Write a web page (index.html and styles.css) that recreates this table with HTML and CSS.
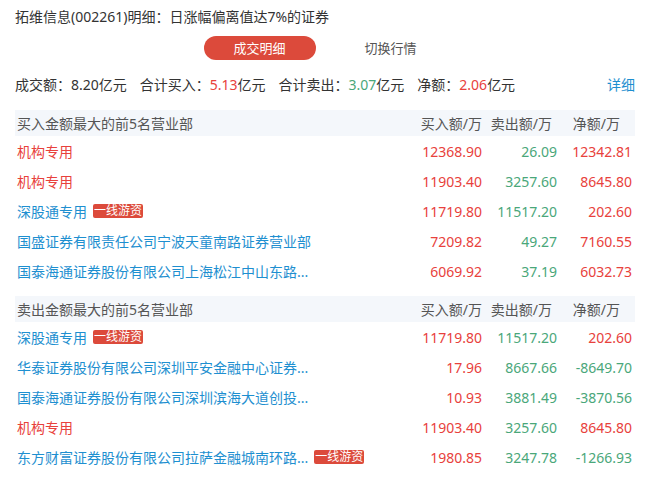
FILE: index.html
```html
<!DOCTYPE html>
<html lang="zh-CN">
<head>
<meta charset="utf-8">
<link rel="stylesheet" href="styles.css">
</head>
<body>
<div class="page">
  <div class="title">拓维信息(002261)明细：日涨幅偏离值达7%的证券</div>
  <div class="tabs">
    <div class="tab active">成交明细</div>
    <div class="tab">切换行情</div>
  </div>
  <div class="summary">
    <div class="stats">
      <span class="stat">成交额：8.20亿元</span>
      <span class="stat">合计买入：<span class="red">5.13</span>亿元</span>
      <span class="stat">合计卖出：<span class="green">3.07</span>亿元</span>
      <span class="stat">净额：<span class="red">2.06</span>亿元</span>
    </div>
    <span class="more">详细</span>
  </div>

  <div class="table">
    <div class="row head">
      <div class="name">买入金额最大的前5名营业部</div>
      <div class="num">买入额/万</div>
      <div class="num h2">卖出额/万</div>
      <div class="num h3">净额/万</div>
    </div>
    <div class="row">
      <div class="name"><span class="inst">机构专用</span></div>
      <div class="num red">12368.90</div>
      <div class="num green">26.09</div>
      <div class="num red">12342.81</div>
    </div>
    <div class="row">
      <div class="name"><span class="inst">机构专用</span></div>
      <div class="num red">11903.40</div>
      <div class="num green">3257.60</div>
      <div class="num red">8645.80</div>
    </div>
    <div class="row">
      <div class="name"><span class="broker">深股通专用</span><span class="tag">一线游资</span></div>
      <div class="num red">11719.80</div>
      <div class="num green">11517.20</div>
      <div class="num red">202.60</div>
    </div>
    <div class="row">
      <div class="name"><span class="broker">国盛证券有限责任公司宁波天童南路证券营业部</span></div>
      <div class="num red">7209.82</div>
      <div class="num green">49.27</div>
      <div class="num red">7160.55</div>
    </div>
    <div class="row">
      <div class="name"><span class="broker">国泰海通证券股份有限公司上海松江中山东路...</span></div>
      <div class="num red">6069.92</div>
      <div class="num green">37.19</div>
      <div class="num red">6032.73</div>
    </div>
  </div>

  <div class="table second">
    <div class="row head">
      <div class="name">卖出金额最大的前5名营业部</div>
      <div class="num">买入额/万</div>
      <div class="num h2">卖出额/万</div>
      <div class="num h3">净额/万</div>
    </div>
    <div class="row">
      <div class="name"><span class="broker">深股通专用</span><span class="tag">一线游资</span></div>
      <div class="num red">11719.80</div>
      <div class="num green">11517.20</div>
      <div class="num red">202.60</div>
    </div>
    <div class="row">
      <div class="name"><span class="broker">华泰证券股份有限公司深圳平安金融中心证券...</span></div>
      <div class="num red">17.96</div>
      <div class="num green">8667.66</div>
      <div class="num green">-8649.70</div>
    </div>
    <div class="row">
      <div class="name"><span class="broker">国泰海通证券股份有限公司深圳滨海大道创投...</span></div>
      <div class="num red">10.93</div>
      <div class="num green">3881.49</div>
      <div class="num green">-3870.56</div>
    </div>
    <div class="row">
      <div class="name"><span class="inst">机构专用</span></div>
      <div class="num red">11903.40</div>
      <div class="num green">3257.60</div>
      <div class="num red">8645.80</div>
    </div>
    <div class="row">
      <div class="name"><span class="broker">东方财富证券股份有限公司拉萨金融城南环路...</span><span class="tag">一线游资</span></div>
      <div class="num red">1980.85</div>
      <div class="num green">3247.78</div>
      <div class="num green">-1266.93</div>
    </div>
  </div>
</div>
</body>
</html>
```

FILE: styles.css
```css
* { box-sizing: border-box; }
html, body { margin: 0; padding: 0; background: #fff; }
body {
  font-family: "Noto Sans", "Noto Sans CJK SC", sans-serif;
  font-size: 14px;
  color: #333;
}
.page {
  width: 620px;
  margin-left: 15px;
  padding-top: 7px;
}
.title {
  line-height: 20px;
  color: #333;
}
.tabs {
  display: flex;
  justify-content: center;
  gap: 19px;
  margin-top: 9px;
}
.tab {
  width: 112px;
  height: 24px;
  line-height: 24px;
  text-align: center;
  font-size: 13px;
  color: #555;
  border-radius: 12px;
}
.tab.active {
  background: #dc4a3b;
  color: #fff;
}
.summary {
  display: flex;
  justify-content: space-between;
  align-items: center;
  margin-top: 15px;
  line-height: 20px;
}
.stats {
  display: flex;
  gap: 13px;
}
.more { color: #1e8fd0; }
.red { color: #e8413c; }
.green { color: #4aa77a; }
.table { margin-top: 15px; }
.table.second { margin-top: 10px; }
.row {
  display: flex;
  align-items: center;
  height: 30px;
  padding-right: 3px;
}
.row.head {
  height: 26px;
  background: #f4f7fb;
  color: #555;
}
.name {
  flex: 1;
  display: flex;
  align-items: center;
  padding-left: 2px;
  white-space: nowrap;
  overflow: hidden;
}
.num {
  width: 75px;
  text-align: right;
  white-space: nowrap;
}
.row.head .num.h2 { padding-right: 5px; }
.row.head .num.h3 { padding-right: 12px; }
.inst { color: #e8413c; }
.broker { color: #1e8fd0; }
.tag {
  display: inline-block;
  margin-left: 6px;
  height: 14px;
  line-height: 14px;
  padding: 0 1px;
  font-size: 12px;
  color: #fff;
  background: #dc4a3b;
  border-radius: 2px;
}
```
